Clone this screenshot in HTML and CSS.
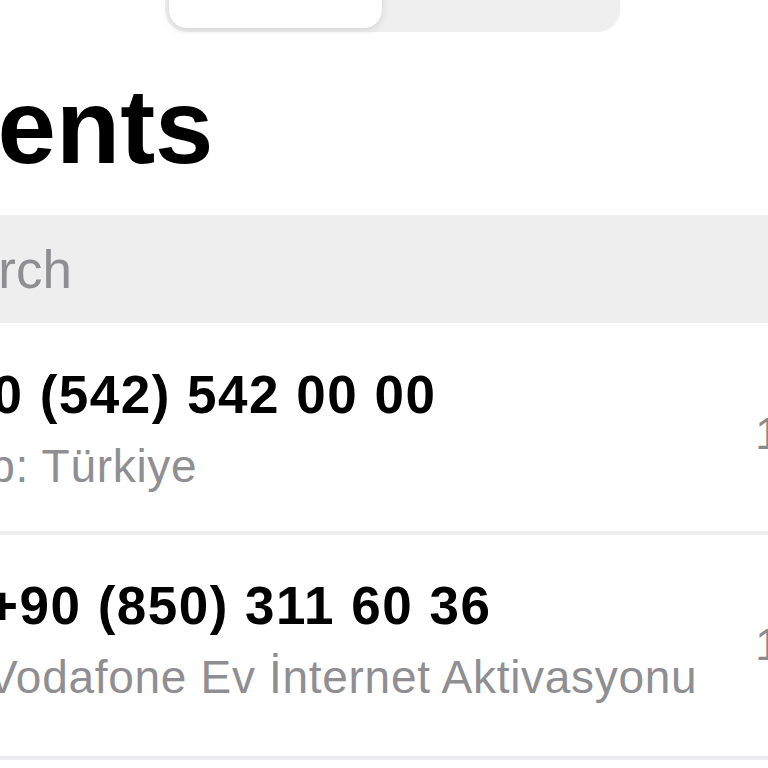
FILE: index.html
```html
<!DOCTYPE html>
<html>
<head>
<meta charset="utf-8">
<link rel="stylesheet" href="styles.css">
</head>
<body>
<div class="screen">
  <div class="seg-area">
    <div class="segmented">
      <div class="seg seg-on">All</div>
      <div class="seg">Missed</div>
    </div>
  </div>
  <h1 class="title">Recents</h1>
  <div class="search"><span class="search-text">Search</span></div>
  <div class="list">
    <div class="row row-1">
      <div class="row-main row-main-1">
        <div class="number">+90 (542) 542 00 00</div>
        <div class="label">Cep: Türkiye</div>
      </div>
      <div class="time">11:42</div>
    </div>
    <div class="row row-2">
      <div class="row-main row-main-2">
        <div class="number">+90 (850) 311 60 36</div>
        <div class="label">Vodafone Ev İnternet Aktivasyonu</div>
      </div>
      <div class="time">11:20</div>
    </div>
  </div>
</div>
</body>
</html>
```

FILE: styles.css
```css
html, body {
  margin: 0;
  padding: 0;
  background: #ffffff;
}
.screen {
  width: 768px;
  height: 768px;
  overflow: hidden;
  font-family: "Liberation Sans", Arial, sans-serif;
  color: #000;
}
.seg-area {
  height: 34px;
  padding-left: 165px;
  overflow: hidden;
}
.segmented {
  margin-top: -40px;
  width: 455px;
  height: 72px;
  box-sizing: border-box;
  padding: 4px;
  background: #efeff0;
  border-radius: 22px;
  display: flex;
}
.seg {
  flex: 1;
  display: flex;
  align-items: flex-end;
  justify-content: center;
  font-size: 44px;
  font-weight: 700;
  color: #dcdcdc;
  line-height: 1;
  padding-bottom: 30px;
}
.seg-on {
  flex: 0 0 213px;
  background: #ffffff;
  border-radius: 18px;
  box-shadow: 0 3px 9px rgba(0,0,0,0.10), 0 0 2px rgba(0,0,0,0.06);
  color: #e2e2e2;
}
.title {
  margin: 40px 0 0 -195px;
  font-size: 105px;
  font-weight: 700;
  line-height: 105px;
  white-space: nowrap;
}
.search {
  margin-top: 36px;
  height: 108px;
  background: #eeeeef;
  display: flex;
  align-items: center;
  overflow: hidden;
}
.search-text {
  margin-left: -96px;
  font-size: 53px;
  color: #8e8e93;
  white-space: nowrap;
}
.list {
  display: flex;
  flex-direction: column;
}
.row {
  box-sizing: border-box;
  border-bottom: 4px solid #ececee;
  display: flex;
  justify-content: space-between;
  align-items: flex-start;
  overflow: hidden;
}
.row-1 {
  height: 212px;
  padding-top: 41px;
}
.row-2 {
  height: 225px;
  padding-top: 40px;
}
.row-main {
  white-space: nowrap;
}
.row-main-1 {
  margin-left: -71px;
}
.row-main-2 {
  margin-left: -13px;
}
.number {
  font-size: 53px;
  font-weight: 700;
  letter-spacing: 1.5px;
  line-height: 62px;
}
.label {
  margin-top: 11px;
  font-size: 46px;
  color: #8e8e93;
  line-height: 58px;
  letter-spacing: 0.7px;
}
.time {
  margin-top: 48px;
  margin-right: -94px;
  font-size: 44px;
  line-height: 44px;
  color: #8a8a8e;
}
```
